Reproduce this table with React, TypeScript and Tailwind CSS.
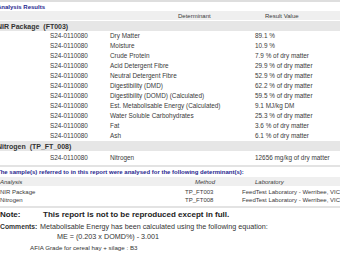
export default function App() {
  const rows: [string, string][] = [
    ["Dry Matter", "89.1 %"],
    ["Moisture", "10.9 %"],
    ["Crude Protein", "7.9 % of dry matter"],
    ["Acid Detergent Fibre", "29.9 % of dry matter"],
    ["Neutral Detergent Fibre", "52.9 % of dry matter"],
    ["Digestibility (DMD)", "62.2 % of dry matter"],
    ["Digestibility (DOMD) (Calculated)", "59.5 % of dry matter"],
    ["Est. Metabolisable Energy (Calculated)", "9.1 MJ/kg DM"],
    ["Water Soluble Carbohydrates", "25.3 % of dry matter"],
    ["Fat", "3.6 % of dry matter"],
    ["Ash", "6.1 % of dry matter"],
  ];
  const Row = ({ d, v }: { d: string; v: string }) => (
    <div className="grid grid-cols-[54px_60px_145px_1fr] h-[10px] items-center text-[6.4px] leading-none whitespace-nowrap">
      <span />
      <span>S24-0110080</span>
      <span>{d}</span>
      <span>{v}</span>
    </div>
  );
  return (
    <div className="w-[340px] h-[255px] overflow-hidden bg-white text-[#3a3a3a] font-['Liberation_Sans',Arial,sans-serif]">
      <div className="ml-[-4px] w-[344px]">
        <div className="h-[2px] bg-[#dedede]" />
        <div className="h-[9px] flex items-center pl-[1px] text-[6px] font-bold text-[#28288f] leading-none">Analysis Results</div>
        <div className="h-[9px] bg-[#efefef] flex items-center text-[6px] leading-none">
          <span className="w-[269px] pl-[182px]">Determinant</span>
          <span>Result Value</span>
        </div>
        <div className="h-[1px]" />
        <div className="h-[10px] bg-[#e6e6e6] flex items-center pl-[1px] text-[7px] font-bold leading-none text-[#333]">NIR Package&nbsp;&nbsp;(FT003)</div>
        {rows.map(([d, v]) => (
          <Row key={d} d={d} v={v} />
        ))}
        <div className="h-[10px] bg-[#e6e6e6] flex items-center pl-[1px] text-[7px] font-bold leading-none text-[#333]">Nitrogen&nbsp;&nbsp;(TP_FT_008)</div>
        <div className="h-[2px]" />
        <Row d="Nitrogen" v="12656 mg/kg of dry matter" />
        <div className="h-[2px]" />
        <div className="h-[2px] bg-[#e3e3e3]" />
        <div className="h-[10px] flex items-center pl-[1px] text-[6px] font-bold text-[#28288f] leading-none whitespace-nowrap">The sample(s) referred to in this report were analysed for the following determinant(s):</div>
        <div className="h-[9px] bg-[#efefef] flex items-center text-[6px] italic leading-none whitespace-nowrap">
          <span className="w-[199px] pl-[4px]">Analysis</span>
          <span className="w-[60px]">Method</span>
          <span>Laboratory</span>
        </div>
        <div className="h-[2px]" />
        {[["NIR Package", "TP_FT003"], ["Nitrogen", "TP_FT008"]].map(([a, m]) => (
          <div key={a} className="h-[8px] flex items-center text-[6px] leading-none whitespace-nowrap">
            <span className="w-[199px] pl-[4px]">{a}</span>
            <span className="w-[60px]">{m}</span>
            <span>FeedTest Laboratory - Werribee, VIC</span>
          </div>
        ))}
        <div className="h-[2px]" />
        <div className="h-[2px] bg-[#e3e3e3]" />
        <div className="h-[14px] flex items-center text-[8px] font-bold leading-none text-[#222] whitespace-nowrap">
          <span className="w-[47px] pl-[4px]">Note:</span>
          <span>This report is not to be reproduced except in full.</span>
        </div>
        <div className="h-[10px] flex items-center text-[7.2px] leading-none text-[#333] whitespace-nowrap">
          <span className="w-[44px] pl-[4px] font-bold text-[6.8px]">Comments:</span>
          <span>Metabolisable Energy has been calculated using the following equation:</span>
        </div>
        <div className="h-[9px] flex items-center text-[7.2px] leading-none text-[#333] pl-[61px] whitespace-nowrap">ME = (0.203 x DOMD%) - 3.001</div>
        <div className="h-[14px] flex items-center text-[6.2px] leading-none text-[#333] pl-[34px] whitespace-nowrap">AFIA Grade for cereal hay + silage : B3</div>
      </div>
    </div>
  );
}
